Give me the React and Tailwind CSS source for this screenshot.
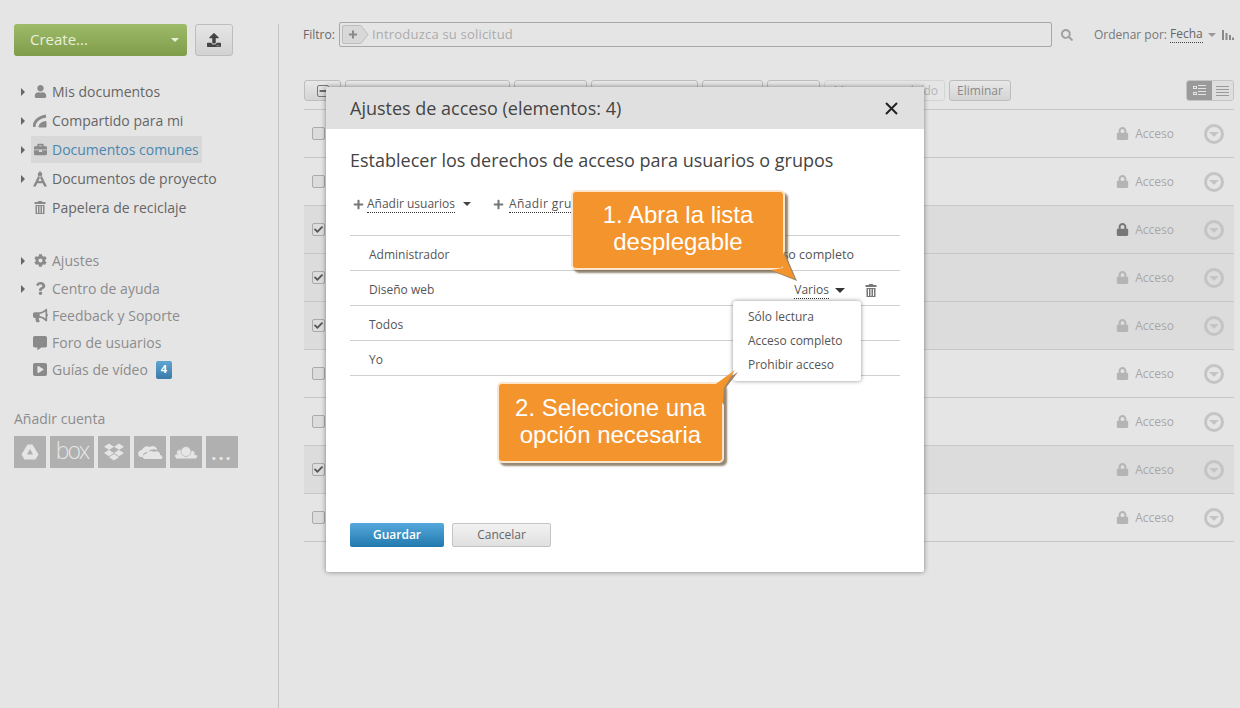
import React from "react";
import {
  FaUser,
  FaBriefcase,
  FaCog,
  FaQuestion,
  FaBullhorn,
  FaCommentAlt,
  FaPlay,
  FaSearch,
  FaLock,
  FaPlus,
  FaDropbox,
  FaCheck,
  FaMinus,
  FaUpload,
} from "react-icons/fa";

const font = "font-['Open_Sans',sans-serif]";

const Caret = ({ className = "" }) => (
  <span className={`inline-block w-0 h-0 border-x-[4px] border-x-transparent border-t-[4px] ${className}`} />
);

const Side = () => <Caret className="-rotate-90 border-t-[#666]" />;

const SharedIcon = () => (
  <svg width="14" height="14" viewBox="0 0 14 14" fill="none" stroke="#8a8a8a">
    <path d="M1 13 C1 8 5 3.5 13 2" strokeWidth="3" />
    <path d="M6 13 C6 10 8.5 8 13 7.5 L13 13 Z" fill="#8a8a8a" strokeWidth="1" />
  </svg>
);

const CompassIcon = () => (
  <svg width="14" height="16" viewBox="0 0 14 16" fill="#8a8a8a">
    <circle cx="7" cy="3.2" r="2.2" />
    <path d="M6 1 L7 0 L8 1 Z" />
    <path d="M5.2 5 L7 6.5 L2.8 15.5 L0 15.5 Z" />
    <path d="M8.8 5 L7 6.5 L11.2 15.5 L14 15.5 Z" />
    <path d="M3.5 9.5 Q7 11 10.5 9.5 L11.2 11.5 Q7 13.2 2.8 11.5 Z" />
  </svg>
);

const BinIcon = ({ color = "#8a8a8a" }) => (
  <svg width="12" height="13" viewBox="0 0 12 13" fill={color}>
    <rect x="4" y="0" width="4" height="1" />
    <rect x="0.5" y="1" width="11" height="2" />
    <path d="M1.5 4 H10.5 V13 H1.5 Z M3 5 V12 H4 V5 Z M5.5 5 V12 H6.5 V5 Z M8 5 V12 H9 V5 Z" fillRule="evenodd" />
  </svg>
);

const docs = [
  { label: "Mis documentos", icon: <FaUser size={13} />, arrow: true },
  { label: "Compartido para mi", icon: <SharedIcon />, arrow: true },
  { label: "Documentos comunes", icon: <FaBriefcase size={13} />, arrow: true, active: true },
  { label: "Documentos de proyecto", icon: <CompassIcon />, arrow: true },
  { label: "Papelera de reciclaje", icon: <BinIcon /> },
];

const help = [
  { label: "Ajustes", icon: <FaCog size={13} />, arrow: true },
  { label: "Centro de ayuda", icon: <FaQuestion size={13} />, arrow: true },
  { label: "Feedback y Soporte", icon: <FaBullhorn size={15} /> },
  { label: "Foro de usuarios", icon: <FaCommentAlt size={14} /> },
  { label: "Guías de vídeo", icon: <FaPlay size={7} />, video: true, badge: 4 },
];

const rows = [false, false, true, true, true, false, false, true, false];

const NavItem = ({ item, h, tone }) => (
  <div className={`flex items-center pl-[19px] ${h}`}>
    <span className="w-[12px] flex items-center">{item.arrow && <Side />}</span>
    <div
      className={`flex items-center h-[27px] pl-[1px] ${item.active ? "bg-[#d8d8d8] w-[171px]" : ""}`}
    >
      <span className="w-[16px] mr-[4px] flex justify-center text-[#8a8a8a]">
        {item.video ? (
          <span className="w-[14px] h-[13px] rounded-[2px] bg-[#8a8a8a] flex items-center justify-center text-[#e5e5e5]">
            {item.icon}
          </span>
        ) : (
          item.icon
        )}
      </span>
      <span className={`text-[14px] ${item.active ? "text-[#4a87b0]" : tone}`}>{item.label}</span>
      {item.badge && (
        <span className="ml-[8px] w-[16px] h-[18px] rounded-[2px] bg-gradient-to-b from-[#5fa5d2] to-[#3a7ba8] text-white text-[11px] font-bold flex items-center justify-center">
          {item.badge}
        </span>
      )}
    </div>
  </div>
);

const Tile = ({ w, children }) => (
  <div className={`h-[32px] bg-[#b0b0b0] flex items-center justify-center text-[#e5e5e5] ${w}`}>
    {children}
  </div>
);

const Check = ({ on }) => (
  <span className="w-[13px] h-[13px] rounded-[2px] border border-[#aaa] bg-[#dcdcdc] flex items-center justify-center text-[#555]">
    {on && <FaCheck size={9} />}
  </span>
);

const ToolBtn = ({ w, children }) => (
  <div
    className={`h-[21px] rounded-[3px] border border-[#bdbdbd] bg-gradient-to-b from-[#e8e8e8] to-[#d4d4d4] flex items-center justify-center text-[12px] text-[#8a8a8a] ${w}`}
  >
    {children}
  </div>
);

const AccessRow = ({ name, children }) => (
  <div className="h-[35px] border-b border-[#d0d0d0] flex items-center justify-between pt-[4px] pl-[19px] pr-[23px] text-[12px] text-[#555]">
    <span>{name}</span>
    {children}
  </div>
);

const Callout = ({ className, tail, children }) => (
  <div
    className={`absolute z-20 rounded-[5px] bg-[#f4942d] border-2 border-[#fbe6cd] shadow-[3px_3px_2px_rgba(90,70,40,0.65)] text-white text-[24px] leading-[27px] text-center font-['Liberation_Sans',sans-serif] flex items-center justify-center ${className}`}
  >
    {children}
    {tail}
  </div>
);

export default function App() {
  return (
    <div className={`relative w-[1240px] h-[708px] overflow-hidden bg-[#e5e5e5] flex ${font}`}>
      {/* sidebar */}
      <aside className="w-[279px] shrink-0 pt-[24px] h-full flex flex-col">
        <div className="flex gap-[8px] pl-[14px]">
          <div className="w-[173px] h-[32px] rounded-[3px] bg-gradient-to-b from-[#9dbb68] to-[#7f9c4b] flex items-center justify-between pl-[16px] pr-[8px] pb-[2px] text-[#e9efdc] text-[15px]">
            <span>Create...</span>
            <Caret className="border-t-[#e9efdc] mt-[2px]" />
          </div>
          <div className="w-[38px] h-[32px] rounded-[3px] border border-[#bdbdbd] bg-gradient-to-b from-[#e6e6e6] to-[#d2d2d2] flex items-center justify-center text-[#444]">
            <FaUpload size={14} />
          </div>
        </div>

        <div className="mt-[21px]">
          {docs.map((d) => (
            <NavItem key={d.label} item={d} h="h-[29px]" tone="text-[#666]" />
          ))}
        </div>

        <div className="mt-[24px]">
          {help.map((d, i) => (
            <NavItem key={d.label} item={d} h={i === 0 ? "h-[29px]" : "h-[27px]"} tone="text-[#8c8c8c]" />
          ))}
        </div>

        <div className="pl-[14px] mt-[26px] text-[14px] text-[#8c8c8c] leading-[20px]">Añadir cuenta</div>
        <div className="pl-[14px] mt-[7px] flex gap-[4px]">
          <Tile w="w-[32px]">
            <svg width="18" height="16" viewBox="0 0 18 16" fill="#e5e5e5">
              <path d="M6.5 0.5 H11.5 L17.5 10.5 L14.5 15.5 H3.5 L0.5 10.5 Z M9 5 L6 10.5 H12 Z" fillRule="evenodd" />
            </svg>
          </Tile>
          <Tile w="w-[44px]">
            <span className="text-[23px] leading-none tracking-[-2px] font-light -mt-[3px]">box</span>
          </Tile>
          <Tile w="w-[32px]">
            <FaDropbox size={20} />
          </Tile>
          <Tile w="w-[32px]">
            <svg width="26" height="16" viewBox="0 0 26 16" fill="#e5e5e5">
              <path d="M2 12 C0 9 2 6 5 6 C6 3 10 1 13 3 C15 1 19 2 20 5 L20 6 C16 4 12 6 11 8 C8 8 5 10 6 13 L3 13 Z" />
              <path d="M8 15 C5 15 5 10 9 10 C10 7 15 6 17 8 C20 6 24 9 23 11 C26 11 26 15 24 15 Z" />
            </svg>
          </Tile>
          <Tile w="w-[32px]">
            <svg width="24" height="14" viewBox="0 0 24 14" fill="#e5e5e5" stroke="#b0b0b0" strokeWidth="0.7">
              <circle cx="6" cy="8" r="3.5" />
              <circle cx="18" cy="8.5" r="3" />
              <circle cx="2.5" cy="11" r="2" />
              <circle cx="21.5" cy="11.5" r="2" />
              <rect x="2" y="10" width="20" height="3.5" stroke="none" />
              <circle cx="12" cy="6.5" r="5" />
            </svg>
          </Tile>
          <Tile w="w-[32px]">
            <span className="text-[18px] font-bold leading-none mt-[2px] tracking-[2px]">...</span>
          </Tile>
        </div>
      </aside>

      {/* main */}
      <main className="relative flex-1 min-w-0 h-full pl-[25px] pr-[6px] pt-[22px]">
        <div className="absolute left-[-1px] top-[24px] bottom-0 w-px bg-[#c4c4c4]" />
        <div className="flex items-center h-[25px] -ml-[1px] whitespace-nowrap">
          <span className="text-[12px] text-[#666] w-[36px] shrink-0">Filtro:</span>
          <div className="w-[713px] shrink-0 h-[25px] rounded-[2px] border border-[#a8a8a8] flex items-center pl-[2px]">
            <svg width="27" height="19" viewBox="0 0 27 19">
              <path d="M2 0.5 H19 L26 9.5 L19 18.5 H2 Q0.5 18.5 0.5 17 V2 Q0.5 0.5 2 0.5 Z" fill="#d8d8d8" stroke="#bdbdbd" />
              <path d="M11 5.5 V13.5 M7 9.5 H15" stroke="#8a8a8a" strokeWidth="2" />
            </svg>
            <span className="ml-[3px] text-[13px] text-[#ababab] tracking-[0.2px]">Introduzca su solicitud</span>
          </div>
          <span className="ml-[8px] w-[28px] shrink-0 text-[#a0a0a0]">
            <FaSearch size={12} className="ml-[1px]" />
          </span>
          <span className="ml-[6px] text-[12px] text-[#777]">Ordenar por:</span>
          <span className="ml-[3px] text-[12px] text-[#666] border-b border-dotted border-[#444] leading-[16px]">Fecha</span>
          <Caret className="ml-[5px] border-t-[#999]" />
          <svg className="ml-[6px]" width="12" height="10" viewBox="0 0 12 10" fill="#8a8a8a">
            <rect x="0" y="0" width="2" height="10" />
            <rect x="3.5" y="3" width="2" height="7" />
            <rect x="7" y="5" width="2" height="5" />
            <rect x="10" y="7.5" width="2" height="2.5" />
          </svg>
        </div>

        <div className="flex items-center mt-[33px] gap-[4px]">
          <ToolBtn w="w-[37px]">
            <span className="w-[12px] h-[12px] rounded-[2px] border border-[#777] flex items-center justify-center text-[#444]">
              <FaMinus size={8} />
            </span>
          </ToolBtn>
          <ToolBtn w="w-[165px]" />
          <ToolBtn w="w-[73px]" />
          <ToolBtn w="w-[107px]" />
          <ToolBtn w="w-[61px]" />
          <ToolBtn w="w-[53px]" />
          <div className="w-[121px] h-[21px] rounded-[3px] border border-[#d4d4d4] flex items-center justify-end pr-[6px] text-[12px] text-[#b5b5b5]">
            Marcar como leído
          </div>
          <ToolBtn w="w-[62px]">Eliminar</ToolBtn>
          <div className="ml-auto flex w-[48px] h-[21px] rounded-[3px] overflow-hidden border border-[#c4c4c4]">
            <div className="w-[25px] bg-[#9a9a9a] flex items-center justify-center">
              <svg width="13" height="11" viewBox="0 0 13 11" fill="none" stroke="#e5e5e5">
                <rect x="0.5" y="1.5" width="3" height="2" />
                <rect x="0.5" y="7.5" width="3" height="2" />
                <path d="M5 0.5 H13 M5 3.5 H13 M5 6.5 H13 M5 9.5 H13" />
              </svg>
            </div>
            <div className="flex-1 bg-[#dedede] flex flex-col gap-[2px] items-center justify-center">
              <span className="w-[13px] h-px bg-[#999]" />
              <span className="w-[13px] h-px bg-[#999]" />
              <span className="w-[13px] h-px bg-[#999]" />
              <span className="w-[13px] h-px bg-[#999]" />
            </div>
          </div>
        </div>

        <div className="mt-[8px] border-t border-[#c8c8c8]">
          {rows.map((on, i) => (
            <div
              key={i}
              className={`h-[48px] border-b border-[#c8c8c8] flex items-center pl-[8px] ${on ? "bg-[#dcdcdc]" : ""}`}
            >
              <Check on={on} />
              <div className={`ml-auto flex items-center gap-[6px] text-[12px] text-[#a8a8a8] ${i === 2 ? "[&>svg]:text-[#777]" : "[&>svg]:text-[#b4b4b4]"}`}>
                <FaLock size={13} />
                <span>Acceso</span>
              </div>
              <span className="ml-[30px] mr-[10px] w-[20px] h-[20px] rounded-full border-[3px] border-[#c4c4c4] flex items-center justify-center">
                <Caret className="border-t-[#c4c4c4] !border-x-[5px] !border-t-[5px] mt-[2px]" />
              </span>
            </div>
          ))}
        </div>
      </main>

      {/* access dialog */}
      <div className="absolute z-10 left-[326px] top-[87px] w-[598px] h-[485px] bg-white shadow-[0_0_5px_rgba(0,0,0,0.45)] rounded-[2px] flex flex-col">
        <div className="h-[42px] bg-[#e0e0e0] flex items-center justify-between pl-[24px] pr-[26px] text-[18px] text-[#444]">
          <span>Ajustes de acceso (elementos: 4)</span>
          <svg width="13" height="13" viewBox="0 0 13 13" stroke="#222" strokeWidth="2">
            <path d="M1 1 L12 12 M12 1 L1 12" />
          </svg>
        </div>
        <div className="flex-1 px-[24px] flex flex-col">
          <div className="mt-[18px] text-[18px] leading-[26px] text-[#444]">
            Establecer los derechos de acceso para usuarios o grupos
          </div>
          <div className="mt-[21px] h-[20px] flex items-center text-[12px] text-[#555]">
            <FaPlus size={11} className="ml-[3px] text-[#777]" />
            <span className="ml-[3px] border-b border-dotted border-[#333] leading-[16px]">Añadir usuarios</span>
            <Caret className="ml-[8px] border-t-[#444]" />
            <FaPlus size={11} className="ml-[22px] text-[#777]" />
            <span className="ml-[5px] border-b border-dotted border-[#333] leading-[16px] tracking-[0.4px]">Añadir grupos</span>
          </div>
          <div className="mt-[21px] border-t border-[#d0d0d0]">
            <AccessRow name="Administrador">
              <span className="mr-[23px] text-[12.5px]">Acceso completo</span>
            </AccessRow>
            <AccessRow name="Diseño web">
              <div className="flex items-center">
                <span className="border-b border-dotted border-[#333] leading-[16px]">Varios</span>
                <Caret className="ml-[6px] !border-x-[5px] !border-t-[5px] border-t-[#333]" />
                <span className="ml-[20px]">
                  <BinIcon color="#777" />
                </span>
              </div>
            </AccessRow>
            <AccessRow name="Todos" />
            <AccessRow name="Yo" />
          </div>
          <div className="mt-auto mb-[25px] flex gap-[8px] text-[12px]">
            <div className="w-[94px] h-[24px] rounded-[2px] bg-gradient-to-b from-[#55a9dc] to-[#1f79ad] text-white font-semibold flex items-center justify-center">
              Guardar
            </div>
            <div className="w-[99px] h-[24px] rounded-[2px] border border-[#c4c4c4] bg-gradient-to-b from-[#f2f2f2] to-[#e0e0e0] text-[#666] flex items-center justify-center">
              Cancelar
            </div>
          </div>
        </div>
      </div>

      {/* dropdown */}
      <div className="absolute z-10 left-[733px] top-[301px] w-[128px] h-[80px] bg-white rounded-[3px] shadow-[0_0_4px_rgba(0,0,0,0.45)] pt-[4px] text-[12px] text-[#555]">
        <div className="h-[24px] pl-[15px] flex items-center">Sólo lectura</div>
        <div className="h-[24px] pl-[15px] flex items-center">Acceso completo</div>
        <div className="h-[24px] pl-[15px] flex items-center">Prohibir acceso</div>
      </div>

      {/* callouts */}
      <Callout
        className="left-[571px] top-[190px] w-[214px] h-[80px] pb-[5px]"
        tail={
          <svg className="absolute left-[198px] top-[58px] overflow-visible" width="28" height="32" viewBox="0 0 28 32">
            <path d="M0 20 L12 20 L12 0 L25 30 Z" fill="#9b8465" transform="translate(1 1)" />
            <path d="M0 20 L12 18 L11 0 L24 29 Z" fill="#f4942d" />
          </svg>
        }
      >
        <span>
          1. Abra la lista
          <br />
          desplegable
        </span>
      </Callout>
      <Callout
        className="left-[497px] top-[382px] w-[227px] h-[81px] pb-[3px]"
        tail={
          <svg className="absolute left-[212px] top-[-14px] overflow-visible" width="28" height="34" viewBox="0 0 28 34">
            <path d="M12 34 L13 18 L26 1 L2 16 Z" fill="#9b8465" transform="translate(1 1)" />
            <path d="M12 34 L13 18 L24 0 L2 16 Z" fill="#f4942d" />
          </svg>
        }
      >
        <span>
          2. Seleccione una
          <br />
          opción necesaria
        </span>
      </Callout>
    </div>
  );
}
